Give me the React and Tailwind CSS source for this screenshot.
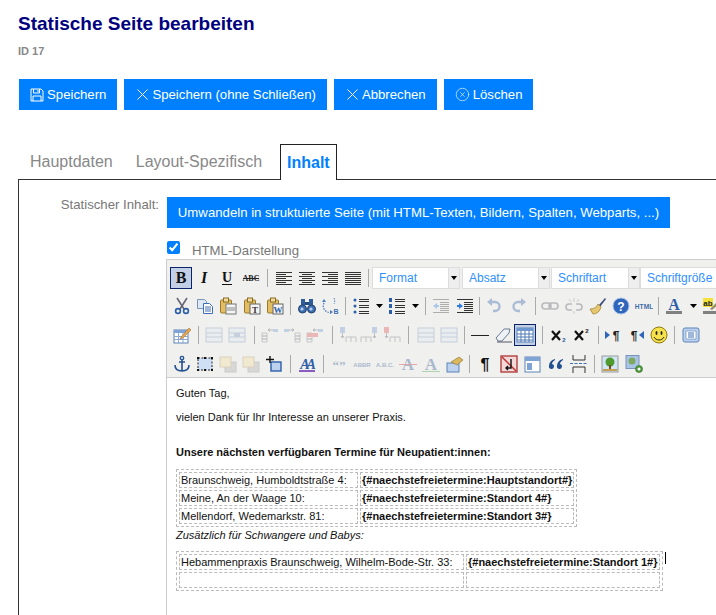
import { CircleX } from 'lucide-react';

const Svg = ({ children, size = 18, dim }) => (
  <svg width={size} height={size} viewBox="0 0 18 18" className={dim ? 'shrink-0 opacity-35' : 'shrink-0'}>
    {children}
  </svg>
);

const serif = '"Liberation Serif", serif';
const sans = '"Liberation Sans", sans-serif';

// stacks of thin lines, used by the align and list icons
const Lines = ({ rows, color = '#333' }) =>
  rows.map(([x, y, w], i) => <rect key={i} x={x} y={y} width={w} height="1" fill={color} />);

const alignRows = (kind) =>
  [0, 1, 2, 3, 4, 5, 6].map((i) => {
    const w = kind === 'j' || i % 2 === 0 ? 16 : 10;
    const x = kind === 'c' ? 1 + (16 - w) / 2 : kind === 'r' ? 17 - w : 1;
    return [x, 3 + i * 2, w];
  });

const Bold = () => <Svg><text x="9" y="14" textAnchor="middle" fontFamily={serif} fontWeight="700" fontSize="16" fill="#111">B</text></Svg>;
const Italic = () => <Svg><text x="9" y="14" textAnchor="middle" fontFamily={serif} fontWeight="700" fontStyle="italic" fontSize="16" fill="#111">I</text></Svg>;
const Under = () => <Svg><text x="9" y="13" textAnchor="middle" fontFamily={serif} fontWeight="700" fontSize="14" fill="#111">U</text><rect x="4" y="15" width="10" height="1" fill="#111" /></Svg>;
const Strike = () => <Svg><text x="9" y="12" textAnchor="middle" fontFamily={serif} fontWeight="700" fontSize="8" fill="#222">ABC</text><rect x="1" y="9" width="16" height="1" fill="#222" /></Svg>;
const Align = ({ kind }) => <Svg><Lines rows={alignRows(kind)} /></Svg>;

const Cut = () => (
  <Svg>
    <path d="M4 1l7 11M14 1L7 12" stroke="#667" strokeWidth="1.6" fill="none" />
    <circle cx="5" cy="14" r="2.4" fill="none" stroke="#2b5ea8" strokeWidth="1.6" />
    <circle cx="13" cy="14" r="2.4" fill="none" stroke="#2b5ea8" strokeWidth="1.6" />
  </Svg>
);
const Copy = () => (
  <Svg>
    <path d="M1.5 2.5h7l2 2v7h-9z" fill="#dfe8f5" stroke="#7a93b8" />
    <path d="M7.5 6.5h6l3 3v7h-9z" fill="#fff" stroke="#3f70b5" />
    <path d="M9 10h6M9 12h6M9 14h6" stroke="#3f70b5" />
  </Svg>
);
const Paste = ({ mark, color = '#555' }) => (
  <Svg>
    <rect x="1.5" y="3" width="11" height="13" rx="1" fill="#e3bd62" stroke="#9a7a2c" />
    <rect x="4.5" y="1" width="5" height="4" fill="#f2dc9e" stroke="#8a6d24" />
    <rect x="7" y="7" width="10" height="10" fill="#f4f4f4" stroke={mark ? '#666' : '#777'} />
    {mark ? (
      <text x="12" y="15.5" textAnchor="middle" fontFamily={serif} fontWeight="700" fontSize="9" fill={color}>{mark}</text>
    ) : (
      <path d="M8 11h8M8 13h8" stroke="#888" />
    )}
  </Svg>
);
const Find = () => (
  <Svg>
    <rect x="3" y="2" width="4" height="6" fill="#2e5c9a" />
    <rect x="11" y="2" width="4" height="6" fill="#2e5c9a" />
    <rect x="7" y="5" width="4" height="3" fill="#244a7e" />
    <circle cx="4.5" cy="12" r="4" fill="#3d6fb0" stroke="#1f3f6f" />
    <circle cx="13.5" cy="12" r="4" fill="#3d6fb0" stroke="#1f3f6f" />
    <circle cx="4" cy="12" r="1.6" fill="#b9d0ee" />
    <circle cx="13" cy="12" r="1.6" fill="#b9d0ee" />
  </Svg>
);
const Replace = () => (
  <Svg>
    <path d="M3 6c-2 4 0 9 7 10" fill="none" stroke="#4a7cc0" strokeWidth="1.3" strokeDasharray="1.5 1.2" />
    <path d="M13 1c1 2 1 4 0 6" fill="none" stroke="#4a7cc0" strokeDasharray="1.5 1.2" />
    <path d="M1 5l2-3 2 3z" fill="#4a7cc0" />
    <path d="M9 13l3 2-3 2z" fill="#4a7cc0" />
    <text x="15" y="17" textAnchor="middle" fontFamily={sans} fontWeight="700" fontSize="7" fill="#3f70b5">B</text>
  </Svg>
);
const Ul = () => (
  <Svg>
    {[3, 9, 15].map((y) => <circle key={y} cx="3" cy={y} r="1.5" fill="#2b5ea8" />)}
    <Lines rows={[[7, 2, 10], [7, 4, 10], [7, 8, 10], [7, 10, 10], [7, 14, 10], [7, 16, 10]]} />
  </Svg>
);
const Ol = () => (
  <Svg>
    {[1, 7, 13].map((y) => <rect key={y} x="1" y={y} width="3" height="4" fill="#2b5ea8" />)}
    <Lines rows={[[7, 2, 10], [7, 4, 10], [7, 8, 10], [7, 10, 10], [7, 14, 10], [7, 16, 10]]} />
  </Svg>
);
const Arrow = () => <svg width="7" height="4" viewBox="0 0 7 4" className="shrink-0"><path d="M0 0h7L3.5 4z" fill="#000" /></svg>;
const Indent = ({ out }) => (
  <Svg dim={out}>
    <Lines rows={[[1, 2, 16], [8, 5, 9], [8, 7, 9], [8, 9, 9], [8, 11, 9], [8, 13, 9], [1, 15, 16]]} />
    <path d={out ? 'M1 9l4-3v2h2v2H5v2z' : 'M7 9L3 6v2H1v2h2v2z'} fill="#2f7de1" />
  </Svg>
);
const Undo = ({ flip }) => (
  <Svg dim>
    <g transform={flip ? 'translate(18 0) scale(-1 1)' : undefined}>
      <path d="M5 5h5a4.5 4.5 0 0 1 0 9H8" fill="none" stroke="#2b5ea8" strokeWidth="2.4" />
      <path d="M7 1L2 5l5 4z" fill="#2b5ea8" />
    </g>
  </Svg>
);
const Link = () => (
  <Svg dim>
    <rect x="1" y="6" width="9" height="6" rx="3" fill="none" stroke="#556" strokeWidth="1.6" />
    <rect x="8" y="6" width="9" height="6" rx="3" fill="none" stroke="#556" strokeWidth="1.6" />
  </Svg>
);
const Unlink = () => (
  <Svg dim>
    <path d="M7 7H4a2.5 2.5 0 0 0 0 6h3M11 7h3a2.5 2.5 0 0 1 0 6h-3" fill="none" stroke="#556" strokeWidth="1.6" />
    <path d="M9 1v4M4 2l2 3M14 2l-2 3M9 14v3" stroke="#889" />
  </Svg>
);
const Broom = () => (
  <Svg>
    <path d="M10 8l6-7 1 1-6 8z" fill="#3c4f78" />
    <path d="M1 12c4 0 7-2 8-5l3 3c-1 4-4 7-8 7z" fill="#e6c66e" stroke="#9a7a2c" strokeWidth="0.7" />
  </Svg>
);
const Help = () => (
  <Svg>
    <circle cx="9" cy="9" r="8" fill="#2f66bb" stroke="#a5c0e6" />
    <text x="9" y="13.5" textAnchor="middle" fontFamily={sans} fontWeight="700" fontSize="12" fill="#fff">?</text>
  </Svg>
);
const Html = () => <Svg><text x="9" y="11.5" textAnchor="middle" fontFamily={sans} fontWeight="700" fontSize="6.6" fill="#3f6ea8">HTML</text></Svg>;
const ForeColor = () => (
  <Svg>
    <text x="9" y="13" textAnchor="middle" fontFamily={serif} fontWeight="700" fontSize="16" fill="#2f5ea6">A</text>
    <rect x="1" y="14" width="16" height="3" fill="#808080" />
  </Svg>
);
const BackColor = () => (
  <Svg>
    <rect x="1" y="1" width="10" height="9" fill="#f2e23a" />
    <text x="6" y="8.5" textAnchor="middle" fontFamily={sans} fontWeight="700" fontSize="8" fill="#222">ab</text>
    <path d="M8 12l7-7 2 2-7 6z" fill="#9a8c70" />
    <rect x="1" y="14" width="16" height="3" fill="#808080" />
  </Svg>
);
const TableEdit = () => (
  <Svg>
    <rect x="1" y="4" width="14" height="13" fill="#fff" stroke="#5d83b8" />
    <rect x="1" y="4" width="14" height="3" fill="#7fa3d4" />
    <path d="M1 10.5h14M1 13.5h14M5.5 7v10M10 7v10" stroke="#8aa8d0" />
    <path d="M8 11l8-9 2 2-8 8-3 1z" fill="#e8a64a" stroke="#9a6a2c" strokeWidth="0.5" />
  </Svg>
);
const TableMuted = ({ hole }) => (
  <Svg dim>
    <rect x="1" y="2" width="16" height="14" fill="#dfe8f5" stroke="#7a93b8" />
    <path d="M1 7h16M1 11h16" stroke="#7a93b8" />
    {hole && <rect x="6" y="7" width="6" height="4" fill="#7a93b8" />}
  </Svg>
);
const RowCol = ({ flip, red }) => (
  <Svg dim>
    <g transform={flip ? 'translate(18 0) scale(-1 1)' : undefined}>
      <path d="M1 7h5v3H1zM1 10h5v3H1zM1 13h5v3H1z" fill="#eee" stroke="#556" strokeWidth="0.7" />
      <rect x="12" y="3" width="5" height="3" fill="#6e97d0" />
      <path d="M7 4h5M7 4l2-1.5M7 4l2 1.5" stroke="#334" fill="none" strokeWidth="0.8" />
    </g>
    {red && <rect x="1" y="7" width="11" height="4" fill="#e05050" />}
  </Svg>
);
const ColIns = ({ flip, red }) => (
  <Svg dim>
    <g transform={flip ? 'translate(18 0) scale(-1 1)' : undefined}>
      <rect x="1" y="1" width="5" height="6" fill={red ? '#e05050' : '#6e97d0'} />
      <path d="M3.5 7v5M2 10l1.5 2L5 10" stroke="#334" fill="none" strokeWidth="0.8" />
      <path d="M7 11h10v5M12 11v5M7 11v5" stroke="#556" fill="none" strokeWidth="0.8" />
    </g>
  </Svg>
);
const Hr = () => <Svg><rect x="0" y="9" width="18" height="1" fill="#222" /></Svg>;
const Eraser = () => (
  <Svg>
    <path d="M2 12l8-9h6l-1 4-7 8H4z" fill="#eef1f6" stroke="#6a7a90" />
    <path d="M3 16h15" stroke="#556" />
  </Svg>
);
const TableIcon = () => (
  <Svg>
    <rect x="1" y="2" width="16" height="14" fill="#fff" stroke="#5d83b8" />
    <rect x="1" y="2" width="16" height="3" fill="#6e97d0" />
    <path d="M1 8h16M1 11h16M1 14h16M5 5v11M9 5v11M13 5v11" stroke="#4f78b4" />
  </Svg>
);
const SubSup = ({ sup }) => (
  <Svg>
    <path d="M2 5l8 9M10 5l-8 9" stroke="#111" strokeWidth="2.2" />
    <text x="14" y={sup ? 7 : 16} textAnchor="middle" fontFamily={sans} fontWeight="700" fontSize="6" fill={sup ? '#222' : '#2f5ea6'}>2</text>
  </Svg>
);
const Dir = ({ rtl }) => (
  <Svg>
    <g transform={rtl ? 'translate(18 0) scale(-1 1)' : undefined}>
      <path d="M1 5l5 4-5 4z" fill="#2f66bb" />
    </g>
    <text x={rtl ? 7 : 12} y="13.5" textAnchor="middle" fontFamily={sans} fontWeight="700" fontSize="12" fill="#222">¶</text>
  </Svg>
);
const Smile = () => (
  <Svg>
    <circle cx="9" cy="9" r="8" fill="#f7e24a" stroke="#8f7a10" />
    <ellipse cx="6.5" cy="7" rx="1" ry="2" fill="#222" />
    <ellipse cx="11.5" cy="7" rx="1" ry="2" fill="#222" />
    <path d="M4 11c2 4 8 4 10 0" fill="none" stroke="#222" />
  </Svg>
);
const Template = () => (
  <Svg>
    <rect x="1" y="2" width="16" height="14" rx="2" fill="#bcd2ee" stroke="#5d83b8" />
    <rect x="4" y="5" width="10" height="8" fill="#fff" stroke="#5d83b8" strokeWidth="0.6" />
    <path d="M6 7h6M6 9h6M6 11h6" stroke="#3f70b5" />
  </Svg>
);
const Anchor = () => (
  <Svg>
    <circle cx="9" cy="3" r="1.7" fill="none" stroke="#24518f" strokeWidth="1.3" />
    <path d="M9 5v11M6 7h6M2 10c0 4 3 6 7 6s7-2 7-6" fill="none" stroke="#24518f" strokeWidth="1.6" />
  </Svg>
);
const Select = () => (
  <Svg>
    <rect x="2" y="3" width="14" height="12" fill="#cfe0f5" stroke="#222" strokeDasharray="2 1.5" />
    {[[2, 3], [16, 3], [2, 15], [16, 15], [9, 3], [9, 15]].map(([x, y]) => <rect key={x + '-' + y} x={x - 1} y={y - 1} width="2" height="2" fill="#111" />)}
  </Svg>
);
const Layers = () => (
  <Svg dim>
    <rect x="6" y="7" width="11" height="10" fill="#aaa" stroke="#888" />
    <rect x="1" y="2" width="11" height="10" fill="#f3dc9a" stroke="#b09a60" />
  </Svg>
);
const Crop = () => (
  <Svg>
    <rect x="6" y="7" width="10" height="9" fill="#bcd2ee" stroke="#2b5ea8" strokeWidth="1.4" />
    <path d="M5 1v7M1 4.5h8" stroke="#111" strokeWidth="1.4" />
  </Svg>
);
const StyleProps = () => (
  <Svg>
    <text x="8.5" y="14" textAnchor="middle" letterSpacing="-3" fontFamily={serif} fontWeight="700" fontStyle="italic" fontSize="14" fill="#2f5ea6">AA</text>
    <rect x="1" y="15" width="16" height="2" fill="#8a5cc0" />
  </Svg>
);
const Tiny = ({ label }) => <Svg dim><text x="9" y="12" textAnchor="middle" fontFamily={sans} fontWeight="700" fontSize="6" fill="#24518f">{label}</text></Svg>;
const Cite = () => <Svg dim><text x="9" y="15" textAnchor="middle" fontFamily={serif} fontWeight="700" fontSize="13" fill="#24518f">“”</text></Svg>;
const DelIns = ({ ins }) => (
  <Svg dim>
    <text x="9" y="15" textAnchor="middle" fontFamily={serif} fontWeight="700" fontSize="17" fill="#24518f">A</text>
    <rect x="0" y={ins ? 16 : 9} width="18" height="1" fill={ins ? '#3a9a3a' : '#d02020'} />
  </Svg>
);
const Attr = () => (
  <Svg>
    <rect x="1" y="8" width="12" height="9" fill="#bcd2ee" stroke="#5d83b8" />
    <path d="M5 7l8-5 4 3-6 5z" fill="#d9b860" stroke="#8a6d24" strokeWidth="0.6" />
  </Svg>
);
const Pilcrow = () => <Svg><text x="9" y="15" textAnchor="middle" fontFamily={sans} fontWeight="700" fontSize="16" fill="#111">¶</text></Svg>;
const Nbsp = () => (
  <Svg>
    <rect x="1" y="1" width="16" height="16" fill="#f3d8d8" stroke="#b04040" strokeWidth="1.4" />
    <path d="M2 2l14 14" stroke="#c03030" strokeWidth="1.4" />
    <path d="M11 4v9H6M8 11l-2 2 2 2" fill="none" stroke="#111" strokeWidth="1.4" />
  </Svg>
);
const Layer = () => (
  <Svg>
    <rect x="1" y="2" width="15" height="15" fill="#fff" stroke="#5d83b8" />
    <rect x="1" y="2" width="15" height="4" fill="#7fa3d4" />
    <rect x="3" y="8" width="5" height="7" fill="#7fa3d4" />
  </Svg>
);
const Quote = () => (
  <Svg>
    <path d="M8 4C4 5 2 8 2 11a2.5 2.5 0 1 0 3-2c0-1 1-3 3-4zM16 4c-4 1-6 4-6 7a2.5 2.5 0 1 0 3-2c0-1 1-3 3-4z" fill="#24518f" />
  </Svg>
);
const PageBreak = () => (
  <Svg>
    <path d="M3 0v5h12V0M3 18v-6h12v6" fill="none" stroke="#333" />
    <path d="M0 8.5h18" stroke="#3f70b5" strokeDasharray="3 1.5" />
  </Svg>
);
const Picture = () => (
  <Svg>
    <rect x="1" y="1" width="16" height="16" fill="#cfe6f7" stroke="#9a9a9a" />
    <circle cx="9" cy="7" r="4.5" fill="#4f9a2c" />
    <rect x="8" y="10" width="2" height="5" fill="#7a4a1c" />
    <rect x="2" y="14" width="14" height="2" fill="#c4a050" />
  </Svg>
);
const PictureAdd = () => (
  <Svg>
    <rect x="1" y="0.5" width="13" height="13" fill="#a8c4e6" stroke="#7a93b8" />
    <circle cx="7" cy="6" r="3.5" fill="#7fa860" />
    <circle cx="14" cy="14" r="3.5" fill="#4f9a3c" stroke="#2f6f20" strokeWidth="0.6" />
    <circle cx="14" cy="14" r="1.5" fill="#fff" />
  </Svg>
);

const rows = [
  [
    ['w-[23px]', <Italic />], ['w-[24px]', <Under />], ['w-[23px]', <Strike />], ['w-[10px]'],
    ['w-[23px]', <Align kind="l" />], ['w-[23px]', <Align kind="c" />], ['w-[23px]', <Align kind="r" />], ['w-[23px]', <Align kind="j" />], ['w-[8px]'],
  ],
  [
    ['w-[23px]', <Cut />], ['w-[23px]', <Copy />], ['w-[24px]', <Paste />], ['w-[23px]', <Paste mark="T" color="#333" />], ['w-[23px]', <Paste mark="W" color="#2b5ea8" />], ['w-[9px]'],
    ['w-[23px]', <Find />], ['w-[23px]', <Replace />], ['w-[8px]'],
    ['w-[23px]', <Ul />], ['w-[14px]', <Arrow />], ['w-[22px]', <Ol />], ['w-[14px]', <Arrow />], ['w-[7px]'],
    ['w-[24px]', <Indent out />], ['w-[23px]', <Indent />], ['w-[6px]'],
    ['w-[23px]', <Undo />], ['w-[28px]', <Undo flip />], ['w-[5px]'],
    ['w-[23px]', <Link />], ['w-[25px]', <Unlink />], ['w-[24px]', <Broom />], ['w-[22px]', <Help />], ['w-[23px]', <Html />], ['w-[6px]'],
    ['w-[26px]', <ForeColor />], ['w-[13px]', <Arrow />], ['w-[22px]', <BackColor />],
  ],
  [
    ['w-[23px]', <TableEdit />], ['w-[10px]'],
    ['w-[22px]', <TableMuted />], ['w-[24px]', <TableMuted hole />], ['w-[10px]'],
    ['w-[22px]', <RowCol />], ['w-[22px]', <RowCol flip />], ['w-[24px]', <RowCol red />], ['w-[10px]'],
    ['w-[21px]', <ColIns />], ['w-[22px]', <ColIns flip />], ['w-[23px]', <ColIns red />], ['w-[11px]'],
    ['w-[23px]', <TableMuted />], ['w-[23px]', <TableMuted />], ['w-[8px]'],
    ['w-[23px]', <Hr />], ['w-[23px]', <Eraser />], ['w-[22px]', <TableIcon />, true], ['w-[12px]'],
    ['w-[22px]', <SubSup />], ['w-[24px]', <SubSup sup />], ['w-[8px]'],
    ['w-[22px]', <Dir />], ['w-[23px]', <Dir rtl />], ['w-[23px]', <Smile />], ['w-[9px]'],
    ['w-[23px]', <Template />],
  ],
  [
    ['w-[23px]', <Anchor />], ['w-[23px]', <Select />], ['w-[23px]', <Layers />], ['w-[23px]', <Layers />], ['w-[23px]', <Crop />], ['w-[10px]'],
    ['w-[23px]', <StyleProps />], ['w-[10px]'],
    ['w-[22px]', <Cite />], ['w-[23px]', <Tiny label="ABBR" />], ['w-[23px]', <Tiny label="A.B.C." />], ['w-[23px]', <DelIns />], ['w-[24px]', <DelIns ins />], ['w-[23px]', <Attr />], ['w-[7px]'],
    ['w-[24px]', <Pilcrow />], ['w-[24px]', <Nbsp />], ['w-[23px]', <Layer />], ['w-[23px]', <Quote />], ['w-[23px]', <PageBreak />], ['w-[8px]'],
    ['w-[24px]', <Picture />], ['w-[23px]', <PictureAdd />],
  ],
];

const ToolItem = ({ w, icon, active }) => {
  if (!icon) {
    return (
      <div className={`${w} flex shrink-0 justify-center`}>
        <div className="h-[18px] w-px bg-[#aaa]" />
      </div>
    );
  }
  return (
    <div className={`${w} flex h-[22px] shrink-0 items-center justify-center ${active ? 'border border-[#0a246a] bg-[#c2cfe5]' : ''}`}>
      {icon}
    </div>
  );
};

const Combo = ({ label, w }) => (
  <div className="flex shrink-0">
    <div className={`${w} flex h-[22px] items-center border border-[#ddd] bg-white pl-[6px] text-[12px] text-[#2f8fff]`}>{label}</div>
    <div className="flex h-[22px] w-[11px] items-center justify-center border-y border-r border-[#ddd] bg-[#eee]">
      <svg width="6" height="4" viewBox="0 0 6 4"><path d="M0 0h6L3 4z" fill="#000" /></svg>
    </div>
  </div>
);

const Toolbar = () => (
  <div className="flex flex-col border-b border-[#ccc] bg-[#f0f0ee] pb-[1px] pl-[3px] pt-[6px]">
    <div className="flex h-[24px] items-center">
      <ToolItem w="w-[22px]" icon={<Bold />} active />
      {rows[0].map(([w, icon], i) => <ToolItem key={i} w={w} icon={icon} />)}
      <Combo label="Format" w="w-[77px]" />
      <div className="w-[2px] shrink-0" />
      <Combo label="Absatz" w="w-[77px]" />
      <div className="w-px shrink-0" />
      <Combo label="Schriftart" w="w-[78px]" />
      <Combo label="Schriftgröße" w="w-[100px]" />
    </div>
    <div className="mt-[4px] flex h-[24px] items-center">
      {rows[1].map(([w, icon, active], i) => <ToolItem key={i} w={w} icon={icon} active={active} />)}
    </div>
    <div className="mt-[5px] flex h-[24px] items-center">
      {rows[2].map(([w, icon, active], i) => <ToolItem key={i} w={w} icon={icon} active={active} />)}
    </div>
    <div className="mt-[5px] flex h-[24px] items-center">
      {rows[3].map(([w, icon, active], i) => <ToolItem key={i} w={w} icon={icon} active={active} />)}
    </div>
  </div>
);

const cell = 'border border-dashed border-[#bbb] p-[1px]';

const DashedTable = ({ rows, first, second, margin }) => (
  <table className={`${margin} border-separate border-spacing-[2px] border border-dashed border-[#bbb]`}>
    <tbody>
      {rows.map(([a, b], i) => (
        <tr key={i}>
          <td className={`${cell} ${first} h-[16px] whitespace-nowrap leading-[12px]`}>{a}</td>
          <td className={`${cell} ${second} h-[16px] whitespace-nowrap font-bold leading-[12px]`}>{b}</td>
        </tr>
      ))}
    </tbody>
  </table>
);

const EditorBody = () => (
  <div className="relative h-[238px] bg-white pl-[9px] pt-[8px] text-[11px] leading-[14px] text-[#111]">
    <p>Guten Tag,</p>
    <p className="mt-[10px]">vielen Dank für Ihr Interesse an unserer Praxis.</p>
    <p className="mt-[21px] font-bold">Unsere nächsten verfügbaren Termine für Neupatient:innen:</p>
    <DashedTable
      margin="mt-[10px]"
      first="w-[179px]"
      second="w-[213px]"
      rows={[
        ['Braunschweig, Humboldtstraße 4:', '{#naechstefreietermine:Hauptstandort#}'],
        ['Meine, An der Waage 10:', '{#naechstefreietermine:Standort 4#}'],
        ['Mellendorf, Wedemarkstr. 81:', '{#naechstefreietermine:Standort 3#}'],
      ]}
    />
    <p className="mt-[1px] italic">Zusätzlich für Schwangere und Babys:</p>
    <DashedTable
      margin="mt-[9px]"
      first="w-[285px]"
      second="w-[193px]"
      rows={[
        ['Hebammenpraxis Braunschweig, Wilhelm-Bode-Str. 33:', '{#naechstefreietermine:Standort 1#}'],
        ['', ''],
      ]}
    />
    {/* text caret */}
    <div className="absolute left-[498px] top-[174px] h-[12px] w-px bg-black" />
  </div>
);

const Btn = ({ icon, pad, gap, children }) => (
  <button className={`flex h-[31px] shrink-0 items-center bg-[#0080ff] text-[13.2px] text-white ${pad} ${gap}`}>
    {icon}
    {children}
  </button>
);

const Floppy = () => (
  <svg width="14" height="14" viewBox="0 0 14 14" fill="none" stroke="#fff" strokeWidth="1">
    <path d="M1 1h10l2 2v10H1z" />
    <path d="M3.5 1v4h6V1M8 2v2M3 13V8h8v5" />
  </svg>
);

// thin cross of the buttons, wider than the lucide one at this size
const Cross = () => (
  <svg width="11" height="11" viewBox="0 0 11 11" fill="none" stroke="#fff" strokeWidth="1">
    <path d="M0.5 0.5l10 10M10.5 0.5l-10 10" />
  </svg>
);

export default function App() {
  return (
    <div className="h-[615px] w-[716px] overflow-hidden bg-white font-['Liberation_Sans',sans-serif]">
      <h1 className="ml-[18px] mt-[13px] text-[19px] font-bold leading-[22px] text-[#000080]">Statische Seite bearbeiten</h1>
      <div className="ml-[18px] mt-[9px] text-[11px] font-bold leading-[14px] text-[#888]">ID 17</div>

      <div className="ml-[19px] mt-[21px] flex gap-[7px]">
        <Btn pad="pl-[11px] pr-[11px]" gap="gap-[3px]" icon={<Floppy />}>Speichern</Btn>
        <Btn pad="pl-[13px] pr-[11px]" gap="gap-[4px]" icon={<Cross />}>Speichern (ohne Schließen)</Btn>
        <Btn pad="pl-[13px] pr-[11px]" gap="gap-[4px]" icon={<Cross />}>Abbrechen</Btn>
        <Btn pad="pl-[11px] pr-[10px]" gap="gap-[3px]" icon={<CircleX size={15} strokeWidth={1} />}>Löschen</Btn>
      </div>

      <div className="mt-[34px] flex h-[36px] pl-[18px] text-[16px] leading-[36px]">
        <div className="w-[12px]" />
        <span className="text-[#888]">Hauptdaten</span>
        <span className="ml-[23px] text-[#888]">Layout-Spezifisch</span>
        <div className="relative z-10 ml-[18px] h-[36px] border border-b-0 border-[#222] bg-white px-[6px] font-bold text-[#0080ff]">Inhalt</div>
      </div>

      <div className="-mt-px ml-[18px] h-[500px] w-[760px] border border-[#333] pt-[17px]">
        <div className="flex">
          <div className="w-[140px] text-right text-[13.2px] leading-[15px] text-[#777]">Statischer Inhalt:</div>
          <div className="ml-[8px] flex flex-col">
            <button className="h-[31px] w-[503px] bg-[#0080ff] text-[13.2px] text-white">
              Umwandeln in struktuierte Seite (mit HTML-Texten, Bildern, Spalten, Webparts, ...)
            </button>
            <label className="mt-[12px] flex h-[14px] items-center">
              <input type="checkbox" defaultChecked className="h-[13px] w-[13px] accent-[#0080ff]" />
              <span className="ml-[12px] translate-y-[4px] text-[13.2px] text-[#777]">HTML-Darstellung</span>
            </label>
          </div>
        </div>
        <div className="ml-[147px] mt-[5px] w-[600px] border border-r-0 border-[#ccc]">
          <Toolbar />
          <EditorBody />
        </div>
      </div>
    </div>
  );
}
